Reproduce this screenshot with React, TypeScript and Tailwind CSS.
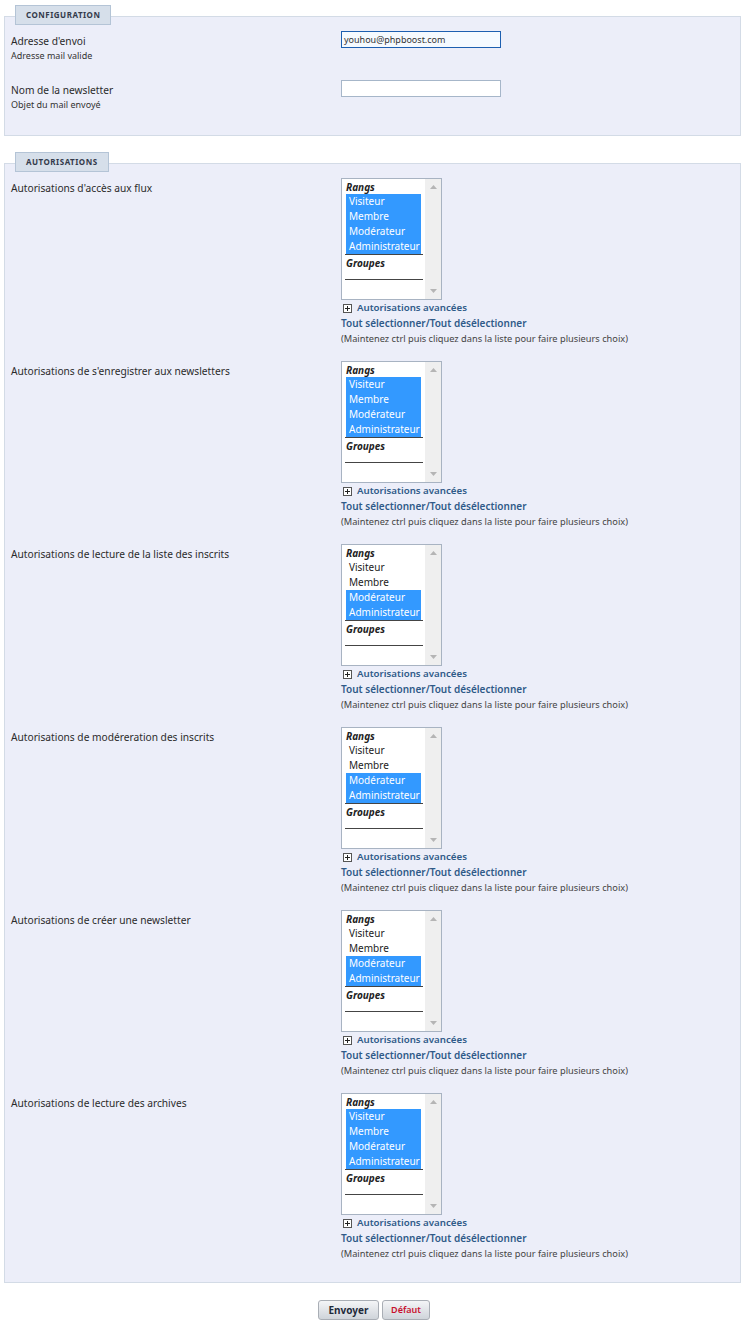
import React from "react";

const font = { fontFamily: '"Noto Sans", "Open Sans", sans-serif' };

type Opt = { name: string; sel: boolean };

function Legend({ children }: { children: React.ReactNode }) {
  return (
    <div className="relative z-10 ml-[11px] flex h-[20px] w-fit items-center border border-[#b4c4d6] bg-[#d6dfea] px-[10px] text-[8px] font-bold tracking-[0.5px] text-[#333a4a]">
      {children}
    </div>
  );
}

function Select({ opts }: { opts: Opt[] }) {
  return (
    <div className="flex h-[122px] w-[101px] border border-[#a8b3c2] bg-white">
      <div className="flex flex-1 flex-col pl-[3px] pr-[2px] pt-[2px] text-[10px] leading-[15px] text-[#222]">
        <div className="h-[13px] pl-[1px] font-bold italic leading-[13px]">Rangs</div>
        <div className="flex flex-col pl-[1px] pr-[2px]">
          {opts.map((o) => (
            <div
              key={o.name}
              className={
                o.sel
                  ? "h-[15px] bg-[#3399ff] pl-[3px] text-white"
                  : "h-[15px] pl-[3px]"
              }
            >
              {o.name}
            </div>
          ))}
        </div>
        <div className="h-[1px] bg-[#444]" />
        <div className="h-[16px] pl-[1px] pt-[1px] font-bold italic leading-[15px]">Groupes</div>
        <div className="mt-[8px] h-[1px] bg-[#444]" />
      </div>
      <div className="flex w-[16px] flex-col items-center justify-between bg-[#efefef] py-[6px]">
        <svg width="7" height="4" viewBox="0 0 7 4">
          <path d="M0 4 L3.5 0 L7 4 Z" fill="#b5b5b5" />
        </svg>
        <svg width="7" height="4" viewBox="0 0 7 4">
          <path d="M0 0 L3.5 4 L7 0 Z" fill="#b5b5b5" />
        </svg>
      </div>
    </div>
  );
}

const all = ["Visiteur", "Membre", "Modérateur", "Administrateur"];

function mk(selFrom: number): Opt[] {
  return all.map((n, i) => ({ name: n, sel: i >= selFrom }));
}

const perms: { label: string; opts: Opt[] }[] = [
  { label: "Autorisations d'accès aux flux", opts: mk(0) },
  { label: "Autorisations de s'enregistrer aux newsletters", opts: mk(0) },
  { label: "Autorisations de lecture de la liste des inscrits", opts: mk(2) },
  { label: "Autorisations de modéreration des inscrits", opts: mk(2) },
  { label: "Autorisations de créer une newsletter", opts: mk(2) },
  { label: "Autorisations de lecture des archives", opts: mk(0) },
];

function PermRow({ label, opts }: { label: string; opts: Opt[] }) {
  return (
    <div className="flex h-[183px]">
      <div className="w-[330px] pt-[4px] text-[10.2px] leading-[13px] text-[#2b2b2b]">
        {label}
      </div>
      <div className="flex flex-col">
        <Select opts={opts} />
        <div className="mt-[1px] flex h-[14px] items-center text-[9.7px] font-semibold text-[#2f5a88]">
          <svg width="9" height="9" viewBox="0 0 9 9" className="ml-[2px] mr-[5px]">
            <rect x="0.5" y="0.5" width="8" height="8" fill="#fff" stroke="#555" />
            <path d="M2 4.5 H7 M4.5 2 V7" stroke="#222" strokeWidth="1" />
          </svg>
          Autorisations avancées
        </div>
        <div className="flex h-[16px] items-center text-[10px] font-semibold text-[#2f5a88]">
          Tout sélectionner/Tout désélectionner
        </div>
        <div className="flex h-[15px] items-center whitespace-nowrap text-[9.25px] text-[#444]">
          (Maintenez ctrl puis cliquez dans la liste pour faire plusieurs choix)
        </div>
      </div>
    </div>
  );
}

export default function App() {
  return (
    <div className="min-h-[1322px] w-[744px] bg-white pl-[4px] pr-[3px] pt-[5px]" style={font}>
      <Legend>CONFIGURATION</Legend>
      <div className="-mt-[9px] h-[120px] border border-[#d3dbe6] bg-[#eceef9] px-[6px] pt-[14px]">
        <div className="flex h-[49px]">
          <div className="w-[330px] pt-[4px]">
            <div className="text-[10.2px] leading-[13px] text-[#2b2b2b]">Adresse d'envoi</div>
            <div className="mt-[3px] text-[9px] leading-[10px] text-[#333]">Adresse mail valide</div>
          </div>
          <div className="flex h-[17px] w-[160px] items-center border border-[#1d5fb0] bg-[#f5faff] px-[2px] text-[9px] text-[#333]">
            youhou@phpboost.com
          </div>
        </div>
        <div className="flex h-[49px]">
          <div className="w-[330px] pt-[4px]">
            <div className="text-[10.2px] leading-[13px] text-[#2b2b2b]">Nom de la newsletter</div>
            <div className="mt-[3px] text-[9px] leading-[10px] text-[#333]">Objet du mail envoyé</div>
          </div>
          <div className="h-[17px] w-[160px] border border-[#a6b6c9] bg-white" />
        </div>
      </div>

      <div className="mt-[16px]">
        <Legend>AUTORISATIONS</Legend>
      </div>
      <div className="-mt-[9px] border border-[#d3dbe6] bg-[#eceef9] px-[6px] pb-[6px] pt-[14px]">
        {perms.map((p) => (
          <PermRow key={p.label} label={p.label} opts={p.opts} />
        ))}
      </div>

      <div className="mt-[17px] flex justify-center gap-[3px] pl-[3px]">
        <button className="h-[20px] w-[61px] rounded-[3px] border border-[#a9aeb5] bg-gradient-to-b from-[#f4f5f7] to-[#cfd4da] text-[10px] font-bold text-[#1e2a3a]">
          Envoyer
        </button>
        <button className="h-[20px] w-[48px] rounded-[3px] border border-[#a9aeb5] bg-gradient-to-b from-[#f4f5f7] to-[#cfd4da] text-[9px] font-semibold text-[#c8102e]">
          Défaut
        </button>
      </div>
    </div>
  );
}
